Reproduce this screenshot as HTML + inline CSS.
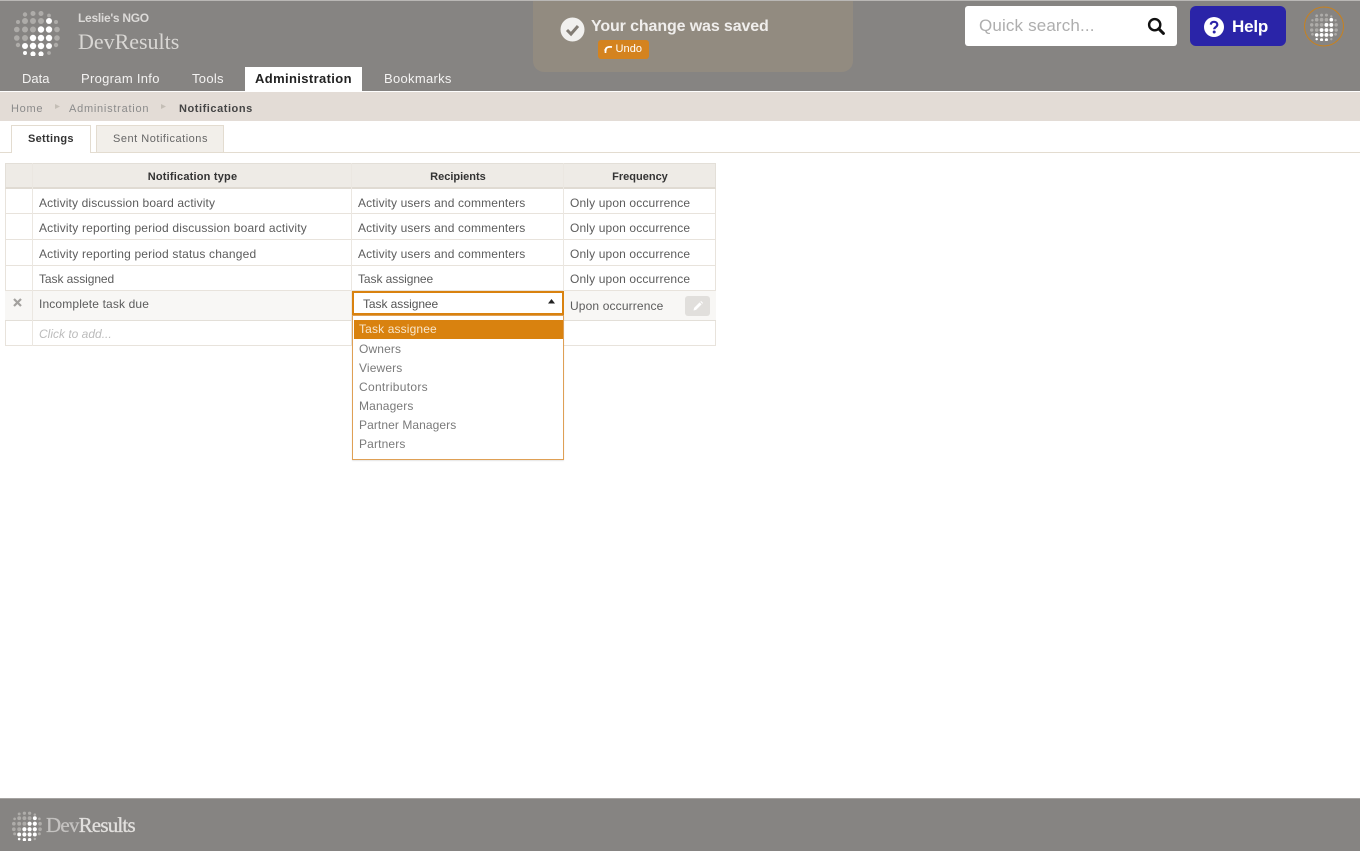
<!DOCTYPE html>
<html lang="en">
<head>
<meta charset="utf-8">
<title>Notifications</title>
<style>
html,body{margin:0;padding:0;background:#fff}
body{position:relative;width:1360px;height:851px;overflow:hidden;font-family:"Liberation Sans",sans-serif;font-size:12px;color:#555}
.b{position:absolute;box-sizing:border-box}
.t{position:absolute;white-space:nowrap;line-height:16px;height:16px}
svg{position:absolute;display:block}
.n{font-size:13px;color:#f4f3f2;letter-spacing:.3px}
.c{font-size:12px;color:#5c5c5c;letter-spacing:.14px}
.k{letter-spacing:-.07px}
.h{font-size:11px;font-weight:bold;color:#333;letter-spacing:.2px;text-align:center}
.o{font-size:12px;color:#7a7a7a;letter-spacing:.14px;left:359px}
.r{left:5px;width:711px;border-bottom:1px solid #e8e3dc}
.v{top:163px;height:183px;width:1px;background:#ebe7e1}
</style>
</head>
<body>
<svg width="0" height="0" style="position:absolute">
<defs>
<symbol id="globe" viewBox="14 10 46 46">
<g fill="#aeaca9" filter="url(#soft)">
<circle cx="33" cy="13.500" r="2.500"/><circle cx="41" cy="13.500" r="2.500"/><circle cx="25" cy="14.500" r="2.200"/><circle cx="49" cy="15.500" r="1.900"/>
<circle cx="18" cy="22" r="2"/><circle cx="25" cy="21" r="3"/><circle cx="33" cy="21" r="3"/><circle cx="41" cy="21" r="3"/><circle cx="56" cy="22" r="2"/>
<circle cx="16.800" cy="29.500" r="2.800"/><circle cx="25" cy="29.500" r="3"/><circle cx="33" cy="29.500" r="3"/><circle cx="57" cy="29.500" r="2.800"/>
<circle cx="16.800" cy="38" r="2.800"/><circle cx="25" cy="38" r="3"/><circle cx="57" cy="38" r="2.800"/>
<circle cx="18" cy="45" r="2.200"/><circle cx="56" cy="45" r="2.200"/><circle cx="49" cy="53" r="1.900"/>
</g>
<g fill="#fff" filter="url(#soft)">
<circle cx="49" cy="21" r="3"/>
<circle cx="41" cy="29.500" r="3.200"/><circle cx="49" cy="29.500" r="3.200"/>
<circle cx="33" cy="38" r="3.200"/><circle cx="41" cy="38" r="3.200"/><circle cx="49" cy="38" r="3.200"/>
<circle cx="25" cy="46" r="3"/><circle cx="33" cy="46" r="3.200"/><circle cx="41" cy="46" r="3.200"/><circle cx="49" cy="46" r="3"/>
<circle cx="25" cy="53" r="2"/><circle cx="33" cy="54" r="2.600"/><circle cx="41" cy="54" r="2.600"/>
</g>
</symbol>
<filter id="soft"><feGaussianBlur stdDeviation=".35"/></filter>
</defs>
</svg>

<!-- Header -->
<div class="b" style="left:0;top:0;width:1360px;height:92px;background:#868482;border-top:1px solid #b9b7b5;border-bottom:1px solid #fff"></div>
<svg style="left:14px;top:10px" width="46" height="46"><use href="#globe"/></svg>
<div class="t" style="left:78px;top:10px;font-size:12px;font-weight:bold;color:#dcdad8;letter-spacing:-.28px">Leslie's NGO</div>
<div class="t" style="left:78px;top:33px;font-family:'Liberation Serif',serif;font-size:22px;line-height:18px;height:18px;color:#d9d7d4;letter-spacing:-.02px">DevResults</div>

<!-- Toast -->
<div class="b" style="left:533px;top:1px;width:320px;height:71px;background:#928b80;border-radius:0 0 11px 11px"></div>
<svg style="left:560px;top:17px" width="25" height="25" viewBox="0 0 25 25"><circle cx="12.500" cy="12.500" r="12" fill="#f1f0ee"/><path d="M7 13l4 4 7-8" fill="none" stroke="#827c74" stroke-width="3"/></svg>
<div class="t" style="left:591px;top:19px;font-size:16px;font-weight:bold;color:#f0eeec;letter-spacing:-.12px">Your change was saved</div>
<div class="b" style="left:598px;top:40px;width:51px;height:19px;background:#d4831f;border-radius:3px"></div>
<svg style="left:604px;top:44px" width="10" height="10" viewBox="0 0 10 10"><path d="M1.500 9V6.500C1.500 3.500 4 2.500 8 3" fill="none" stroke="#fff" stroke-width="1.700"/><path d="M0 5.500l1.500 3 1.500-3z" fill="#fff"/></svg>
<div class="t" style="left:615.500px;top:41px;font-size:11px;color:#fff;letter-spacing:.08px">Undo</div>

<!-- Search -->
<div class="b" style="left:965px;top:6px;width:212px;height:40px;background:#fff;border-radius:3px"></div>
<div class="t" style="left:979px;top:18px;font-size:17px;color:#aeaeae;letter-spacing:.15px">Quick search...</div>
<svg style="left:1146px;top:16px" width="20" height="20" viewBox="0 0 20 20"><circle cx="8.700" cy="8.700" r="5.600" fill="none" stroke="#111" stroke-width="2.400"/><path d="M12.800 12.800l4.600 4.600" stroke="#111" stroke-width="3" stroke-linecap="round"/></svg>

<!-- Help -->
<div class="b" style="left:1190px;top:6px;width:96px;height:40px;background:#2a24a8;border-radius:6px"></div>
<svg style="left:1204px;top:17px" width="20" height="20" viewBox="0 0 20 20"><circle cx="10" cy="10" r="10" fill="#fff"/><path d="M6.800 7.600C7 5.600 8.400 4.800 10 4.800c1.900 0 3.300 1.100 3.300 2.800 0 2.400-3.100 2.500-3.100 4.600" fill="none" stroke="#2a24a8" stroke-width="2.200"/><circle cx="10.200" cy="15" r="1.500" fill="#2a24a8"/></svg>
<div class="t" style="left:1232px;top:19px;font-size:17px;font-weight:bold;color:#fff;letter-spacing:-.2px">Help</div>

<!-- Avatar -->
<svg style="left:1304px;top:6px" width="40" height="41" viewBox="0 0 40 41"><circle cx="20" cy="20.500" r="19.500" fill="none" stroke="#c8811e" stroke-width="1"/></svg>
<svg style="left:1310px;top:13px" width="28" height="28"><use href="#globe"/></svg>

<!-- Nav -->
<div class="b" style="left:245px;top:67px;width:117px;height:25px;background:#fff"></div>
<div class="t n" style="left:22px;top:71px;letter-spacing:0">Data</div>
<div class="t n" style="left:81px;top:71px">Program Info</div>
<div class="t n" style="left:192px;top:71px">Tools</div>
<div class="t n" style="left:255px;top:71px;color:#222;font-weight:bold;letter-spacing:.37px">Administration</div>
<div class="t n" style="left:384px;top:71px">Bookmarks</div>

<!-- Breadcrumb -->
<div class="b" style="left:0;top:92px;width:1360px;height:29px;background:#e3dcd6"></div>
<div class="t" style="left:11px;top:101px;font-size:11px;color:#8b8b8b;letter-spacing:.7px">Home</div>
<svg style="left:54px;top:103px" width="7" height="7"><path d="M1 1l5 2.500-5 2.500z" fill="#c4beb6"/></svg>
<div class="t" style="left:69px;top:101px;font-size:11px;color:#8b8b8b;letter-spacing:.75px">Administration</div>
<svg style="left:160px;top:103px" width="7" height="7"><path d="M1 1l5 2.500-5 2.500z" fill="#c4beb6"/></svg>
<div class="t" style="left:179px;top:101px;font-size:11px;font-weight:bold;color:#444;letter-spacing:.55px">Notifications</div>

<!-- Tabs -->
<div class="b" style="left:0;top:152px;width:1360px;height:1px;background:#e3dcd0"></div>
<div class="b" style="left:11px;top:125px;width:80px;height:28px;background:#fff;border:1px solid #e3dcd0;border-bottom:0"></div>
<div class="t" style="left:28px;top:131px;font-size:11px;font-weight:bold;color:#333;letter-spacing:.3px">Settings</div>
<div class="b" style="left:96px;top:125px;width:128px;height:27px;background:#f2efea;border:1px solid #e3dcd0;border-bottom:0"></div>
<div class="t" style="left:113px;top:131px;font-size:11px;color:#666;letter-spacing:.52px">Sent Notifications</div>

<!-- Table -->
<div class="b" style="left:5px;top:163px;width:711px;height:183px;border:1px solid #e8e3dc;border-top:0"></div>
<div class="b" style="left:5px;top:163px;width:711px;height:26px;background:#eeebe6;border:1px solid #e3dfd8;border-bottom:2px solid #e0dbd3"></div>
<div class="b" style="left:5px;top:291px;width:711px;height:30px;background:#f8f7f5"></div>
<div class="b r" style="top:213px;height:1px"></div>
<div class="b r" style="top:239px;height:1px"></div>
<div class="b r" style="top:265px;height:1px"></div>
<div class="b r" style="top:290px;height:1px"></div>
<div class="b" style="left:5px;top:320px;width:711px;height:1px;background:#e3dfd8"></div>
<div class="b v" style="left:32px"></div>
<div class="b v" style="left:351px"></div>
<div class="b v" style="left:563px"></div>
<div class="t h" style="left:33px;top:169px;width:319px">Notification type</div>
<div class="t h" style="left:352px;top:169px;width:212px;letter-spacing:0">Recipients</div>
<div class="t h" style="left:564px;top:169px;width:152px;letter-spacing:0">Frequency</div>

<div class="t c" style="left:39px;top:195px">Activity discussion board activity</div>
<div class="t c" style="left:358px;top:195px">Activity users and commenters</div>
<div class="t c" style="left:570px;top:195px">Only upon occurrence</div>
<div class="t c" style="left:39px;top:220px;letter-spacing:.18px">Activity reporting period discussion board activity</div>
<div class="t c" style="left:358px;top:220px">Activity users and commenters</div>
<div class="t c" style="left:570px;top:220px">Only upon occurrence</div>
<div class="t c" style="left:39px;top:246px;letter-spacing:.18px">Activity reporting period status changed</div>
<div class="t c" style="left:358px;top:246px">Activity users and commenters</div>
<div class="t c" style="left:570px;top:246px">Only upon occurrence</div>
<div class="t c k" style="left:39px;top:271px">Task assigned</div>
<div class="t c k" style="left:358px;top:271px">Task assignee</div>
<div class="t c" style="left:570px;top:271px">Only upon occurrence</div>
<svg style="left:13px;top:298px" width="9" height="9" viewBox="0 0 9 9"><path d="M1 1l7 7M8 1l-7 7" stroke="#a3a19e" stroke-width="2.200"/></svg>
<div class="t c" style="left:39px;top:296px">Incomplete task due</div>
<div class="t c" style="left:570px;top:298px">Upon occurrence</div>
<div class="b" style="left:685px;top:296px;width:25px;height:20px;background:#e1dfdc;border-radius:3px"></div>
<svg style="left:692px;top:300px" width="12" height="12" viewBox="0 0 12 12"><path d="M1.500 10.500l.6-2.600 5.500-5.500 2 2-5.500 5.500zM8.300 1.700l.8-.7 2 2-.7.800z" fill="#fff"/></svg>
<div class="t" style="left:39px;top:326px;font-size:12px;font-style:italic;color:#bcbcbc">Click to add...</div>

<!-- Select -->
<div class="b" style="left:352px;top:291px;width:212px;height:24px;background:#fff;border:2px solid #d9820f"></div>
<div class="t c k" style="left:363px;top:296px;color:#555">Task assignee</div>
<svg style="left:548px;top:299px" width="7" height="5"><path d="M0 4.500L3.500 0 7 4.500z" fill="#222"/></svg>
<div class="b" style="left:352px;top:315px;width:212px;height:145px;background:#fff;border:1px solid #dfa055;box-shadow:0 1px 1px rgba(0,0,0,.1)"></div>
<div class="b" style="left:354px;top:320px;width:209px;height:19px;background:#d9820f"></div>
<div class="t o k" style="top:321px;color:#f8e6cb">Task assignee</div>
<div class="t o" style="top:341px">Owners</div>
<div class="t o" style="top:360px">Viewers</div>
<div class="t o" style="top:379px;letter-spacing:.3px">Contributors</div>
<div class="t o" style="top:398px">Managers</div>
<div class="t o" style="top:417px;letter-spacing:.08px">Partner Managers</div>
<div class="t o" style="top:436px">Partners</div>

<!-- Footer -->
<div class="b" style="left:0;top:798px;width:1360px;height:53px;background:#868482;border-top:1px solid #a5a3a1"></div>
<svg style="left:12px;top:811px" width="30" height="30"><use href="#globe"/></svg>
<div class="t" style="left:46px;top:817px;font-family:'Liberation Serif',serif;font-size:21px;color:#c4c2c0;letter-spacing:-.8px;-webkit-text-stroke:.3px">Dev<span style="color:#e2e0de">Results</span></div>
</body>
</html>
